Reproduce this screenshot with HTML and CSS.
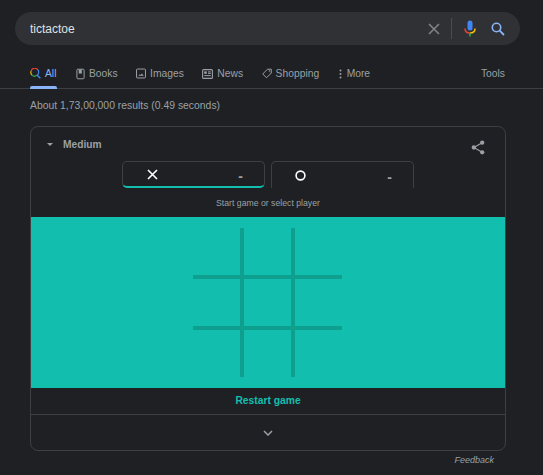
FILE: index.html
```html
<!DOCTYPE html>
<html lang="en">
<head>
    <meta charset="UTF-8">
    <title>tictactoe - Search</title>
    <link rel="stylesheet" href="styles.css">
</head>
<body>
    <div class="search-bar">
        <span class="query">tictactoe</span>
        <svg class="clear-icon" width="12" height="12" viewBox="0 0 12 12"><path d="M1 1L11 11M11 1L1 11" stroke="#81868a" stroke-width="1.5" fill="none"/></svg>
        <span class="search-divider"></span>
        <svg class="mic-icon" width="12" height="18" viewBox="0 0 12 18">
            <rect x="3.5" y="0.5" width="5" height="10" rx="2.5" fill="#4285f4"/>
            <path d="M1 8.5C1 11.5 3 13 6 13" stroke="#ea4335" stroke-width="1.5" fill="none"/>
            <path d="M11 8.5C11 11.5 9 13 6 13" stroke="#fbbc05" stroke-width="1.5" fill="none"/>
            <rect x="5.2" y="13" width="1.6" height="3.5" fill="#34a853"/>
        </svg>
        <svg class="search-icon" width="14" height="14" viewBox="0 0 14 14"><circle cx="5.5" cy="5.5" r="4.2" stroke="#8ab4f8" stroke-width="1.6" fill="none"/><path d="M8.7 8.7L13 13" stroke="#8ab4f8" stroke-width="1.8"/></svg>
    </div>

    <div class="tabs">
        <div class="tab tab-active">
            <svg width="11" height="11" viewBox="0 0 12 12"><path d="M8 1.4A4 4 0 0 0 1.2 3.4" stroke="#ea4335" stroke-width="1.3" fill="none"/><path d="M1.2 3.4A4 4 0 0 0 2.2 7.8" stroke="#fbbc05" stroke-width="1.3" fill="none"/><path d="M2.2 7.8A4 4 0 0 0 7.5 8" stroke="#34a853" stroke-width="1.3" fill="none"/><path d="M7.5 8A4 4 0 0 0 8 1.4" stroke="#4285f4" stroke-width="1.3" fill="none"/><path d="M7.6 7.6L11.3 11.3" stroke="#4285f4" stroke-width="1.5"/></svg>
            All
        </div>
        <div class="tab">
            <svg width="9" height="12" viewBox="0 0 10 12"><rect x="1" y="0.7" width="8" height="10.6" rx="1" stroke="#9aa0a6" stroke-width="1.1" fill="none"/><rect x="3" y="1" width="3.5" height="4.5" fill="#9aa0a6"/></svg>
            Books
        </div>
        <div class="tab">
            <svg width="10" height="11" viewBox="0 0 11 11"><rect x="0.6" y="0.6" width="9.8" height="9.8" rx="1" stroke="#9aa0a6" stroke-width="1.1" fill="none"/><path d="M2.5 8H8.5L6.6 5.5L5 7.2L4.1 6.2Z" fill="#9aa0a6"/></svg>
            Images
        </div>
        <div class="tab">
            <svg width="11" height="10" viewBox="0 0 11 10"><rect x="0.6" y="0.6" width="9.8" height="8.8" rx="1" stroke="#9aa0a6" stroke-width="1.1" fill="none"/><rect x="2.2" y="2.4" width="2.6" height="2.4" fill="#9aa0a6"/><path d="M6 2.9H8.8M6 4.4H8.8M2.2 6.6H8.8" stroke="#9aa0a6"/></svg>
            News
        </div>
        <div class="tab">
            <svg width="10" height="11" viewBox="0 0 11 11"><path d="M6 0.8H10.2V5L5 10.2L0.8 6Z" stroke="#9aa0a6" stroke-width="1.1" fill="none" stroke-linejoin="round"/><circle cx="8.2" cy="2.8" r="0.8" fill="#9aa0a6"/></svg>
            Shopping
        </div>
        <div class="tab tab-more">
            <svg width="3" height="10" viewBox="0 0 3 10"><circle cx="1.5" cy="1.5" r="1" fill="#9aa0a6"/><circle cx="1.5" cy="5" r="1" fill="#9aa0a6"/><circle cx="1.5" cy="8.5" r="1" fill="#9aa0a6"/></svg>
            More
        </div>
        <div class="tab tab-tools">Tools</div>
    </div>

    <div class="result-stats">About 1,73,00,000 results (0.49 seconds)</div>

    <div class="game-card">
        <div class="card-head">
            <div class="level">
                <span class="level-arrow"></span>
                Medium
            </div>
            <svg class="share-icon" width="14" height="15" viewBox="0 0 15 16"><circle cx="12" cy="2.8" r="2.3" fill="#9aa0a6"/><circle cx="3" cy="8" r="2.3" fill="#9aa0a6"/><circle cx="12" cy="13.2" r="2.3" fill="#9aa0a6"/><path d="M12 2.8L3 8L12 13.2" stroke="#9aa0a6" stroke-width="1.2" fill="none"/></svg>
        </div>
        <div class="players">
            <div class="player player-active">
                <svg width="11" height="11" viewBox="0 0 11 11"><path d="M1 1L10 10M10 1L1 10" stroke="#fff" stroke-width="1.6" fill="none"/></svg>
                <span class="score">-</span>
            </div>
            <div class="player">
                <svg class="player-o" width="11" height="11" viewBox="0 0 11 11"><circle cx="5.5" cy="5.5" r="4.4" stroke="#fff" stroke-width="1.6" fill="none"/></svg>
                <span class="score">-</span>
            </div>
        </div>
        <div class="game-hint">Start game or select player</div>
        <div class="board">
            <svg width="150" height="149" viewBox="0 0 150 149">
                <path d="M49 0V149M100 0V149M0 49H149M0 100H149" stroke="#0f9f8e" stroke-width="4" fill="none"/>
            </svg>
        </div>
        <div class="restart">Restart game</div>
        <div class="expand">
            <svg width="10" height="6" viewBox="0 0 10 6"><path d="M1 1L5 5L9 1" stroke="#9aa0a6" stroke-width="1.5" fill="none"/></svg>
        </div>
    </div>
    <div class="feedback">Feedback</div>
</body>
</html>
```

FILE: styles.css
```css
body {
    font-family: 'Liberation Sans', Arial, sans-serif;
    background: #1f2023;
    color: #9aa0a6;
    margin: 0;
    height: 475px;
    overflow: hidden;
}
.search-bar {
    display: flex;
    align-items: center;
    height: 33px;
    width: 505px;
    margin: 12px 0 0 15px;
    padding: 0 15px;
    box-sizing: border-box;
    background: #303134;
    border-radius: 17px;
}
.query {
    flex: 1;
    color: #dfe1e5;
    font-size: 12px;
}
.clear-icon {
    margin-right: 11px;
}
.search-divider {
    width: 1px;
    height: 21px;
    background: #4a4c50;
    margin-right: 12px;
}
.mic-icon {
    margin-right: 15px;
}
.tabs {
    display: flex;
    align-items: flex-start;
    height: 33px;
    margin-top: 11px;
    padding: 11px 38px 0 30px;
    box-sizing: border-box;
    border-bottom: 1px solid #3c4043;
    font-size: 10.3px;
    gap: 18.5px;
}
.tab {
    display: flex;
    align-items: center;
    gap: 4px;
    height: 13px;
}
.tab-active {
    color: #8ab4f8;
    position: relative;
    margin-right: 1px;
}
.tab-active::after {
    content: "";
    position: absolute;
    left: 0;
    right: -1px;
    bottom: -9px;
    height: 3px;
    background: #8ab4f8;
    border-radius: 2px 2px 0 0;
}
.tab-more {
    gap: 5px;
    margin-left: 1px;
}
.tab-tools {
    margin-left: auto;
}
.result-stats {
    margin: 10px 0 0 30px;
    font-size: 10.4px;
    line-height: 14px;
}
.game-card {
    width: 476px;
    height: 325px;
    margin: 13px 0 0 30px;
    box-sizing: border-box;
    border: 1px solid #3c4043;
    border-radius: 8px;
    display: flex;
    flex-direction: column;
}
.card-head {
    display: flex;
    align-items: center;
    justify-content: space-between;
    height: 34px;
    padding: 0 20px 0 16px;
    flex-shrink: 0;
}
.share-icon {
    margin-top: 6px;
}
.level {
    display: flex;
    align-items: center;
    gap: 10px;
    font-size: 10.2px;
    font-weight: bold;
}
.level-arrow {
    width: 0;
    height: 0;
    border: 3px solid transparent;
    border-top: 3.5px solid #9aa0a6;
    border-bottom: 0;
}
.players {
    display: flex;
    justify-content: center;
    gap: 6px;
    height: 27px;
    flex-shrink: 0;
}
.player {
    width: 143px;
    box-sizing: border-box;
    display: flex;
    align-items: center;
    justify-content: space-between;
    padding: 0 21px 0 24px;
    border: 1px solid #3c4043;
    border-bottom: 0;
    border-radius: 5px 5px 0 0;
}
.player-active {
    border-bottom: 2px solid #12bfae;
    border-radius: 5px;
}
.player-o {
    margin-left: -1px;
}
.score {
    font-size: 14px;
    font-weight: bold;
    margin-top: 4px;
}
.game-hint {
    height: 29px;
    line-height: 30px;
    text-align: center;
    font-size: 8.7px;
    flex-shrink: 0;
}
.board {
    height: 171px;
    background: #12bfae;
    display: flex;
    align-items: center;
    justify-content: center;
    flex-shrink: 0;
}
.restart {
    height: 26px;
    line-height: 25px;
    border-bottom: 1px solid #3c4043;
    text-align: center;
    color: #12bfae;
    font-size: 10.3px;
    font-weight: bold;
    flex-shrink: 0;
}
.expand {
    flex: 1;
    display: flex;
    align-items: center;
    justify-content: center;
}
.feedback {
    width: 464px;
    margin: 4px 0 0 30px;
    text-align: right;
    font-size: 9px;
    font-style: italic;
}
```
